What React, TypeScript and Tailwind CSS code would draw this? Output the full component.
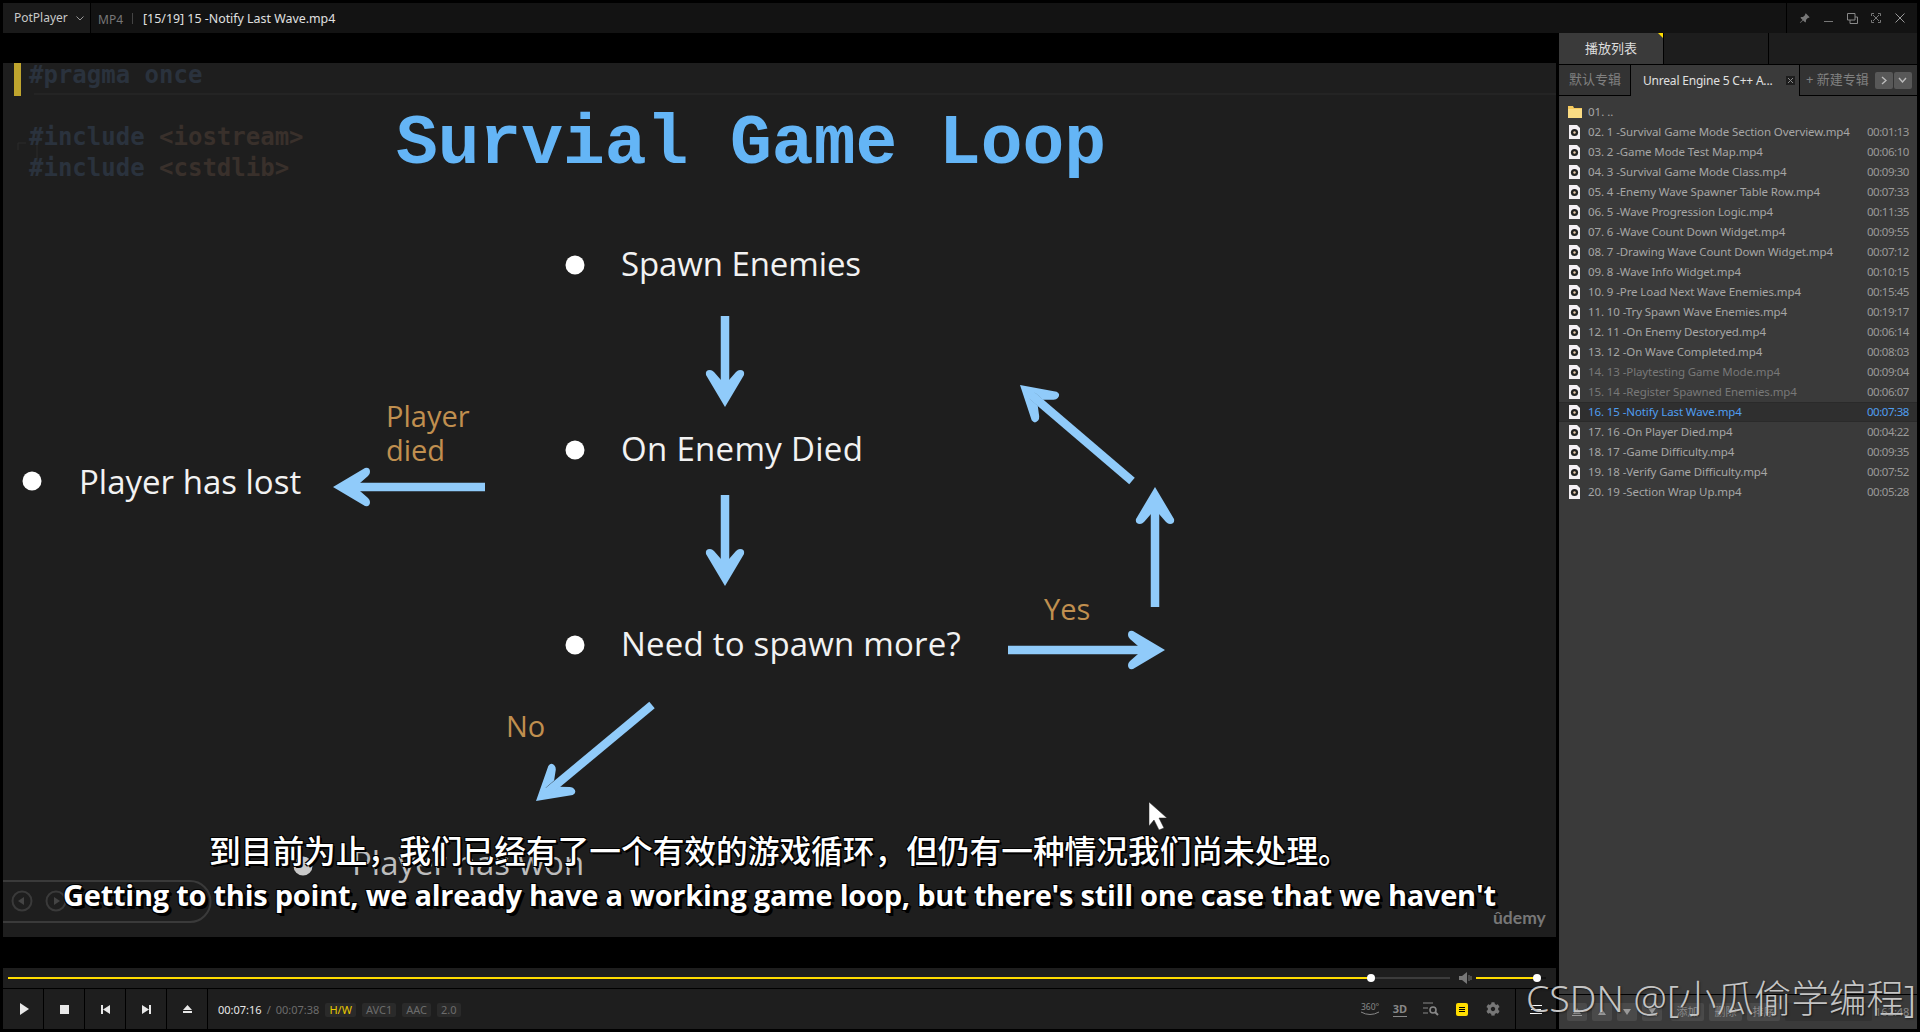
import React from "react";
import { BsPinAngleFill } from "react-icons/bs";
import { FaCog } from "react-icons/fa";

const rows: [string, string, number?][] = [
  ["02. 1 -Survival Game Mode Section Overview.mp4", "00:01:13"],
  ["03. 2 -Game Mode Test Map.mp4", "00:06:10"],
  ["04. 3 -Survival Game Mode Class.mp4", "00:09:30"],
  ["05. 4 -Enemy Wave Spawner Table Row.mp4", "00:07:33"],
  ["06. 5 -Wave Progression Logic.mp4", "00:11:35"],
  ["07. 6 -Wave Count Down Widget.mp4", "00:09:55"],
  ["08. 7 -Drawing Wave Count Down Widget.mp4", "00:07:12"],
  ["09. 8 -Wave Info Widget.mp4", "00:10:15"],
  ["10. 9 -Pre Load Next Wave Enemies.mp4", "00:15:45"],
  ["11. 10 -Try Spawn Wave Enemies.mp4", "00:19:17"],
  ["12. 11 -On Enemy Destoryed.mp4", "00:06:14"],
  ["13. 12 -On Wave Completed.mp4", "00:08:03"],
  ["14. 13 -Playtesting Game Mode.mp4", "00:09:04", 1],
  ["15. 14 -Register Spawned Enemies.mp4", "00:06:07", 1],
  ["16. 15 -Notify Last Wave.mp4", "00:07:38", 2],
  ["17. 16 -On Player Died.mp4", "00:04:22"],
  ["18. 17 -Game Difficulty.mp4", "00:09:35"],
  ["19. 18 -Verify Game Difficulty.mp4", "00:07:52"],
  ["20. 19 -Section Wrap Up.mp4", "00:05:28"],
];

function FileIcon() {
  return (
    <svg width="11" height="14" viewBox="0 0 11 14" className="shrink-0">
      <path d="M0 0H8L11 3V14H0Z" fill="#f4f0f4" />
      <circle cx="5.5" cy="7.5" r="3.6" fill="#222" />
      <circle cx="5.5" cy="7.5" r="1.2" fill="#e8c8a8" />
    </svg>
  );
}

function FolderIcon() {
  return (
    <svg width="14" height="12" viewBox="0 0 14 12" className="shrink-0">
      <path d="M0 0H5L6 2H14V12H0Z" fill="#f5c95c" />
      <rect x="0" y="3" width="14" height="9" fill="#fbdc84" />
    </svg>
  );
}

function Head({ x, y, r }: { x: number; y: number; r: number }) {
  return (
    <path
      transform={`translate(${x} ${y}) rotate(${r})`}
      d="M0 0L19 32Q20 37 15 37Q13 37 11 35L4 27V16H-4V27L-11 35Q-13 37 -15 37Q-20 37 -19 32Z"
      fill="#90cbfa"
    />
  );
}

function Arrows() {
  return (
    <svg
      className="absolute inset-0"
      width="1553"
      height="874"
      viewBox="3 63 1553 874"
    >
      <g stroke="#90cbfa" strokeWidth="8.5" fill="none">
        <path d="M725 316V396" />
        <path d="M725 495V575" />
        <path d="M485 487H344" />
        <path d="M1008 650H1154" />
        <path d="M1155 607V498" />
        <path d="M1132 481L1029 393" />
        <path d="M652 705L545 794" />
      </g>
      <Head x={725} y={407} r={180} />
      <Head x={725} y={586} r={180} />
      <Head x={333} y={487} r={-90} />
      <Head x={1165} y={650} r={90} />
      <Head x={1155} y={487} r={0} />
      <Head x={1020} y={385} r={-49} />
      <Head x={536} y={801} r={-130} />
      <path
        d="M1149 802V826L1154 820L1159 830L1164 828L1159 818H1167Z"
        fill="#fff"
        stroke="#222"
        strokeWidth="0.5"
      />
      <g fill="#fff">
        <circle cx="575" cy="265" r="9.5" />
        <circle cx="575" cy="450" r="9.5" />
        <circle cx="575" cy="645" r="9.5" />
        <circle cx="32" cy="481" r="9.5" />
        <circle cx="303" cy="866" r="9.5" fill="#c8c8c8" />
      </g>
      <g stroke="#3a3a3a" strokeWidth="2" fill="none">
        <path d="M3 881H190A20.5 20.5 0 0 1 190 922H3" />
        <circle cx="22" cy="901" r="9.5" />
        <circle cx="56" cy="901" r="9.5" />
      </g>
      <path d="M24 897V905L18 901ZM54 897V905L60 901Z" fill="#444" />
      <path d="M37 130V175M18 143H26M18 143V150" stroke="#2a2a2a" fill="none" />
      <path d="M34 94H1556" stroke="#242424" strokeWidth="2" fill="none" />
    </svg>
  );
}

function Slide() {
  return (
    <div className="relative w-[1553px] h-[874px] bg-[#1e1e1e] overflow-hidden font-['Open_Sans',sans-serif]">
      <Arrows />
      <div className="absolute left-[11px] top-0 w-[7px] h-[33px] bg-[#bfa52e]" />
      <div className="absolute left-[26px] top-[-3px] font-['DejaVu_Sans_Mono',monospace] font-bold text-[24px] leading-[30px] text-[#2a323d] whitespace-pre">
        #pragma once
      </div>
      <div className="absolute left-[26px] top-[59px] font-['DejaVu_Sans_Mono',monospace] font-bold text-[24px] leading-[31px] whitespace-pre text-[#2a323d]">
        <div>
          #include <span className="text-[#39302b]">&lt;iostream&gt;</span>
        </div>
        <div>
          #include <span className="text-[#39302b]">&lt;cstdlib&gt;</span>
        </div>
      </div>
      <div className="absolute left-[393px] top-[42px] font-['Liberation_Mono',monospace] font-bold text-[69.6px] leading-[80px] text-[#64b5f6] whitespace-pre">
        Survial Game Loop
      </div>
      <div className="absolute left-[618px] top-[178px] text-[33px] tracking-[-0.1px] leading-[45px] text-[#f2f2f2] whitespace-pre">
        Spawn Enemies
      </div>
      <div className="absolute left-[618px] top-[363px] text-[33px] tracking-[0.3px] leading-[45px] text-[#f2f2f2] whitespace-pre">
        On Enemy Died
      </div>
      <div className="absolute left-[618px] top-[558px] text-[33px] tracking-[0.2px] leading-[45px] text-[#f2f2f2] whitespace-pre">
        Need to spawn more?
      </div>
      <div className="absolute left-[76px] top-[396px] text-[33px] leading-[45px] text-[#f2f2f2] whitespace-pre">
        Player has lost
      </div>
      <div className="absolute left-[349px] top-[777px] text-[33px] leading-[45px] text-[#bdbdbd] whitespace-pre">
        Player has won
      </div>
      <div className="absolute left-[383px] top-[336px] text-[29px] leading-[34px] text-[#c08f4f]">
        <div>Player</div>
        <div>died</div>
      </div>
      <div className="absolute left-[1041px] top-[526px] text-[29px] leading-[40px] text-[#c08f4f]">
        Yes
      </div>
      <div className="absolute left-[503px] top-[643px] text-[29px] leading-[40px] text-[#c08f4f]">
        No
      </div>
      <div className="absolute left-[1490px] top-[845px] font-['Lato',sans-serif] font-bold text-[17.5px] leading-[20px] text-[#777]">
        ûdemy
      </div>
      <div className="absolute left-[206px] top-[765px] font-['Noto_Sans_CJK_SC',sans-serif] font-medium text-[31.7px] leading-[42px] text-white whitespace-pre [text-shadow:2px_2px_0_#000,-1px_-1px_0_#000,1px_-1px_0_#000,-1px_1px_0_#000]">
        到目前为止，我们已经有了一个有效的游戏循环，但仍有一种情况我们尚未处理。
      </div>
      <div className="absolute left-[60px] top-[810px] font-['Open_Sans',sans-serif] font-bold text-[29px] tracking-[-0.245px] leading-[44px] text-white whitespace-pre [text-shadow:2px_2px_0_#000,3px_3px_0_#000,-1px_-1px_0_#000,1px_-1px_0_#000,-1px_1px_0_#000]">
        Getting to this point, we already have a working game loop, but there's still one case that we haven't
      </div>
    </div>
  );
}

function CtlButton({ children }: { children: React.ReactNode }) {
  return (
    <div className="w-[41px] h-full flex items-center justify-center border-r border-black">
      {children}
    </div>
  );
}

function Chip({ children, yellow }: { children: React.ReactNode; yellow?: boolean }) {
  return (
    <span
      className={
        yellow
          ? "h-[14px] px-[4px] rounded-[2px] bg-[#2a2a2a] text-[#e8c800] text-[11px] leading-[14px]"
          : "h-[14px] px-[4px] rounded-[2px] bg-[#2a2a2a] text-[#6c6c6c] text-[11px] leading-[14px]"
      }
    >
      {children}
    </span>
  );
}

function Controls() {
  return (
    <div className="w-[1553px] h-[61px] flex flex-col bg-[#1e1e1e]">
      <div className="h-[20px] flex items-center pl-[5px] border-b border-black box-content">
        <div className="relative w-[1363px] h-[2px] bg-[#ffdd00]">
          <div className="absolute right-[-4px] top-[-3px] w-[8px] h-[8px] rounded-full bg-white" />
        </div>
        <div className="w-[79px] h-[2px] bg-[#3c3c3c]" />
        <svg width="14" height="12" viewBox="0 0 14 12" className="ml-[9px]">
          <path d="M0 4H3L8 0V12L3 8H0Z" fill="#777" />
          <path d="M10 3V9M12 4V8" stroke="#777" />
        </svg>
        <div className="relative ml-[3px] w-[61px] h-[2px] bg-[#ffdd00]">
          <div className="absolute right-[-4px] top-[-3px] w-[8px] h-[8px] rounded-full bg-white" />
        </div>
        <div className="ml-[4px] w-[5px] h-[2px] bg-[#111]" />
      </div>
      <div className="flex-1 flex items-center">
        <CtlButton>
          <svg width="9" height="12" viewBox="0 0 9 12" className="ml-[2px]"><path d="M0 0L9 6L0 12Z" fill="#e8e8e8" /></svg>
        </CtlButton>
        <CtlButton>
          <div className="w-[9px] h-[9px] bg-[#e8e8e8]" />
        </CtlButton>
        <CtlButton>
          <svg width="9" height="9" viewBox="0 0 9 9"><path d="M0 0H2V9H0ZM9 0V9L2 4.5Z" fill="#e8e8e8" /></svg>
        </CtlButton>
        <CtlButton>
          <svg width="9" height="9" viewBox="0 0 9 9"><path d="M9 0H7V9H9ZM0 0V9L7 4.5Z" fill="#e8e8e8" /></svg>
        </CtlButton>
        <CtlButton>
          <svg width="9" height="8" viewBox="0 0 9 8"><path d="M4.5 0L9 5H0ZM0 6H9V8H0Z" fill="#e8e8e8" /></svg>
        </CtlButton>
        <div className="ml-[10px] flex items-center gap-[6px] text-[11px] leading-[14px] pt-[2px]">
          <span className="text-[#e8e8e8]">00:07:16</span>
          <span className="text-[#777] mx-[-1px]">/</span>
          <span className="text-[#6c6c6c]">00:07:38</span>
          <Chip yellow>H/W</Chip>
          <Chip>AVC1</Chip>
          <Chip>AAC</Chip>
          <Chip>2.0</Chip>
        </div>
        <div className="ml-auto flex items-center h-full">
          <svg width="20" height="16" viewBox="0 0 20 16" className="mr-[13px]">
            <text x="1" y="9" fontSize="8.5" fill="#888">360°</text>
            <path d="M1 11Q10 16 19 11" stroke="#888" fill="none" />
          </svg>
          <span className="text-[11px] font-bold leading-[14px] text-[#888] border-b border-[#888] mr-[16px]">3D</span>
          <svg width="16" height="14" viewBox="0 0 16 14" className="mr-[17px]">
            <path d="M0 1H10M0 6H5M0 11H5" stroke="#888" fill="none" />
            <circle cx="10" cy="8" r="3" stroke="#888" strokeWidth="1.6" fill="none" />
            <path d="M12 10L15 13" stroke="#888" strokeWidth="2" />
          </svg>
          <div className="w-[12px] h-[13px] rounded-[2px] bg-[#ffdd00] flex flex-col items-center justify-center gap-[1px] mr-[18px]">
            <div className="w-[6px] h-[1px] bg-black" />
            <div className="w-[6px] h-[1px] bg-black" />
            <div className="w-[6px] h-[1px] bg-black" />
          </div>
          <FaCog className="text-[#777] mr-[15px]" size={14} />
          <div className="w-[41px] h-full border-l border-black flex flex-col items-center justify-center gap-[3px]">
            <div className="w-[12px] h-[1px] bg-white" />
            <div className="w-[10px] h-[1px] bg-white" />
            <div className="w-[12px] h-[1px] bg-white" />
          </div>
        </div>
      </div>
    </div>
  );
}

function TitleBar() {
  return (
    <div className="h-[30px] mx-[3px] flex items-center bg-[#131313] text-[12px] text-[#ddd]">
      <div className="w-[88px] h-full flex items-center pl-[11px] gap-[8px] bg-[#1a1a1a] border-r border-black text-[#c8c8c8]">
        PotPlayer
        <svg width="8" height="5" viewBox="0 0 8 5"><path d="M0.5 0.5L4 4L7.5 0.5" stroke="#999" fill="none" /></svg>
      </div>
      <span className="ml-[7px] pt-[3px] text-[#777]">MP4</span>
      <div className="ml-[9px] w-px h-[11px] bg-[#444]" />
      <span className="ml-[10px] pt-[3px] text-[12.4px] text-[#e0e0e0]">[15/19] 15 -Notify Last Wave.mp4</span>
      <div className="ml-auto w-[131px] h-full border-l border-black flex items-center pl-[12px] text-[#777]">
        <BsPinAngleFill size={11} className="mr-[14px]" />
        <div className="w-[9px] h-[1.5px] bg-[#777] mt-[7px] mr-[14px]" />
        <svg width="11" height="11" viewBox="0 0 11 11" className="mr-[13px]"><path d="M0.5 0.5H8V7H0.5ZM3 7V10.5H10.5V4H8" stroke="#888" fill="none" /></svg>
        <svg width="10" height="10" viewBox="0 0 10 10" className="mr-[14px]"><path d="M0.5 3V0.5H3M7 0.5H9.5V3M9.5 7V9.5H7M3 9.5H0.5V7M2 2L8 8M8 2L2 8" stroke="#777" fill="none" /></svg>
        <svg width="10" height="10" viewBox="0 0 10 10"><path d="M0.5 0.5L9.5 9.5M9.5 0.5L0.5 9.5" stroke="#999" fill="none" /></svg>
      </div>
    </div>
  );
}

function SmallButton({ d }: { d: string }) {
  return (
    <div className="w-[20px] h-[18px] rounded-[2px] bg-[#4a4a4a] flex items-center justify-center">
      <svg width="10" height="8" viewBox="0 0 10 8"><path d={d} fill="#999" /></svg>
    </div>
  );
}

function TextButton({ children }: { children: React.ReactNode }) {
  return (
    <div className="h-[18px] w-[33px] rounded-[2px] bg-[#4a4a4a] text-[11px] leading-[18px] text-center text-[#8a8a8a]">
      {children}
    </div>
  );
}

function Playlist() {
  return (
    <div className="w-[358px] h-full flex flex-col bg-[#3a3a3a]">
      <div className="h-[32px] flex bg-[#1d1d1d] border-b border-black">
        <div className="relative w-[105px] border-r border-black bg-[#3a3a3a] flex items-center pl-[26px] text-[13px] text-[#ddd]">
          播放列表
          <svg width="5" height="5" viewBox="0 0 5 5" className="absolute right-0 top-0">
            <path d="M0 0H5V5Z" fill="#ffdd00" />
          </svg>
        </div>
        <div className="w-[105px] border-r border-black" />
      </div>
      <div className="h-[31px] flex items-center text-[13px] text-[#808080]">
        <div className="w-[72px] h-full flex items-center pl-[10px] border-r border-b border-black bg-[#333]">默认专辑</div>
        <div className="w-[168px] h-full flex items-center pl-[12px] text-[12px] text-[#e0e0e0]">
          <span className="tracking-[-0.2px]">Unreal Engine 5 C++ A...</span>
          <div className="ml-auto mr-[4px] w-[9px] h-[9px] bg-[#1d1d1d] flex items-center justify-center">
            <svg width="5" height="5" viewBox="0 0 5 5"><path d="M0 0L5 5M5 0L0 5" stroke="#888" /></svg>
          </div>
        </div>
        <div className="flex-1 h-full flex items-center pl-[6px] border-l border-b border-black bg-[#333]">
          + 新建专辑
          <div className="ml-[6px] w-[18px] h-[17px] rounded-[2px] bg-[#585858] flex items-center justify-center">
            <svg width="6" height="9" viewBox="0 0 6 9"><path d="M1 1L5 4.5L1 8" stroke="#bbb" fill="none" strokeWidth="1.4" /></svg>
          </div>
          <div className="ml-px w-[18px] h-[17px] rounded-[2px] bg-[#585858] flex items-center justify-center">
            <svg width="9" height="6" viewBox="0 0 9 6"><path d="M1 1L4.5 5L8 1" stroke="#bbb" fill="none" strokeWidth="1.4" /></svg>
          </div>
        </div>
      </div>
      <div className="pt-[6px] flex flex-col text-[11.5px] leading-[20px] text-[#a6a6a6]">
        <div className="h-[20px] flex items-center pl-[9px]">
          <FolderIcon />
          <span className="ml-[6px]">01. ..</span>
        </div>
        {rows.map(([name, time, kind]) => (
          <div
            key={name}
            className={
              kind === 2
                ? "h-[20px] flex items-center pl-[10px] pr-[8px] bg-[#2f2f2f] border-y border-[#2a2a2a] text-[#4f9ef0]"
                : kind === 1
                  ? "h-[20px] flex items-center pl-[10px] pr-[8px] text-[#787878]"
                  : "h-[20px] flex items-center pl-[10px] pr-[8px]"
            }
          >
            <FileIcon />
            <span className="ml-[8px] whitespace-pre tracking-[-0.1px]">{name}</span>
            <span className={kind === 2 ? "ml-auto tracking-[-0.45px]" : "ml-auto tracking-[-0.45px] text-[#999]"}>{time}</span>
          </div>
        ))}
      </div>
      <div className="mt-auto h-[35px] border-t border-black flex items-start pt-[8px] pl-[8px]">
        <div className="flex gap-[5px]">
          <SmallButton d="M0 8H10V7H0ZM5 0L9 6H1Z" />
          <SmallButton d="M5 1L9 7H1Z" />
          <SmallButton d="M5 7L9 1H1Z" />
          <SmallButton d="M0 8H10V7H0ZM5 6L9 0H1Z" />
        </div>
        <div className="ml-[9px] flex gap-[5px]">
          <TextButton>添加</TextButton>
          <TextButton>删除</TextButton>
          <TextButton>排序</TextButton>
        </div>
        <div className="ml-[5px] w-[87px] h-[18px] rounded-[2px] bg-[#323232]" />
        <span className="ml-[3px] text-[11px] leading-[18px] text-[#888]">162:48</span>
      </div>
    </div>
  );
}

export default function App() {
  return (
    <div className="relative w-[1920px] h-[1032px] bg-black pt-[3px] pb-[3px] flex flex-col overflow-hidden font-['Noto_Sans','Noto_Sans_CJK_SC',sans-serif]">
      <TitleBar />
      <div className="flex-1 min-h-0 flex pl-[3px] pr-[3px]">
        <div className="w-[1553px] flex flex-col">
          <div className="h-[30px]" />
          <Slide />
          <div className="h-[31px]" />
          <Controls />
        </div>
        <div className="w-[3px]" />
        <Playlist />
      </div>
      <div className="absolute left-[1526px] top-[975px] font-['Noto_Sans','Noto_Sans_CJK_SC',sans-serif] font-light text-[37.5px] leading-[46px] text-[#c4c4c4] whitespace-pre [text-shadow:1px_1px_2px_#00000080]">
        CSDN @[小瓜偷学编程]
      </div>
    </div>
  );
}
